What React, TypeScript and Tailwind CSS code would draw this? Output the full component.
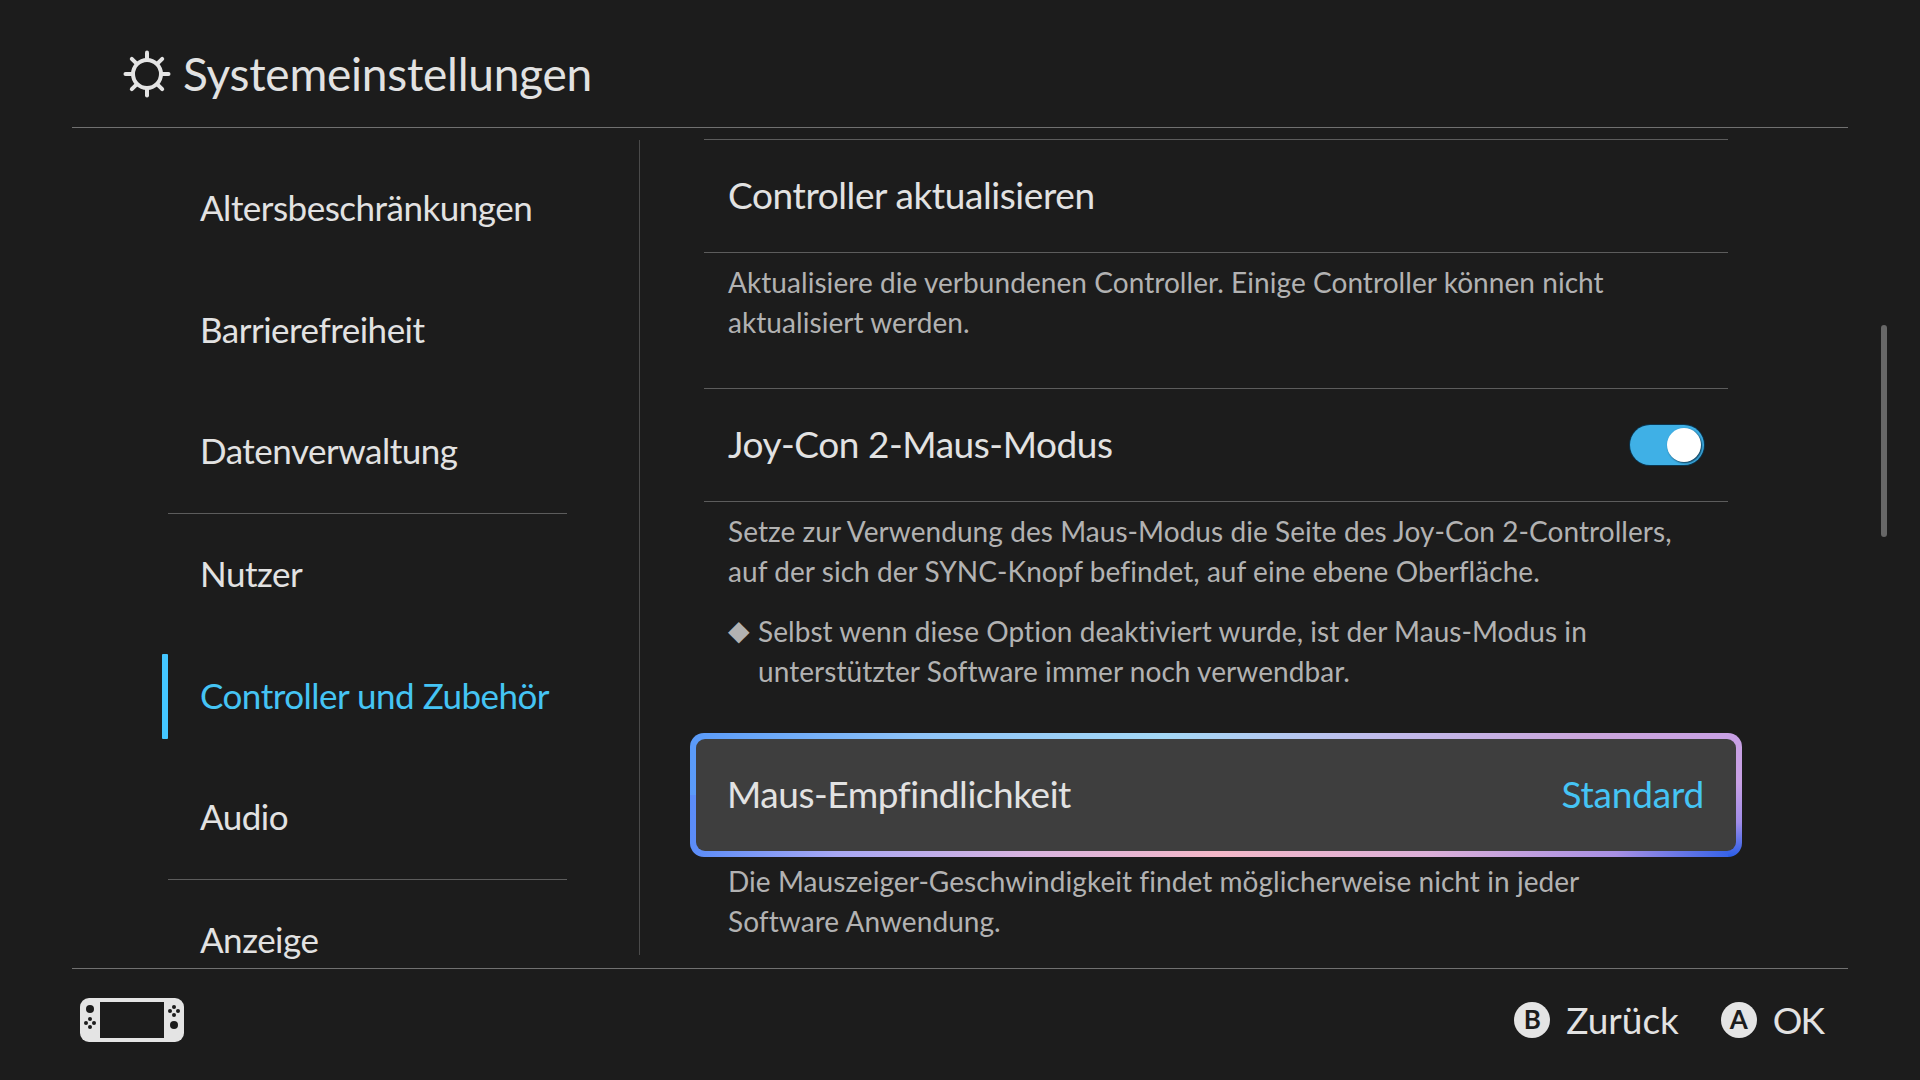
const font = "[font-family:Lato,'Noto_Sans',sans-serif]";

function Gear() {
  const rays = [0, 45, 90, 135, 180, 225, 270, 315];
  return (
    <svg width="48" height="48" viewBox="0 0 48 48" fill="none" stroke="#e4e4e4" strokeWidth="4" strokeLinecap="round">
      <circle cx="24" cy="24" r="14" />
      {rays.map((r) => (
        <line key={r} x1="24" y1="9" x2="24" y2="2.5" transform={`rotate(${r} 24 24)`} />
      ))}
    </svg>
  );
}

function Console() {
  return (
    <svg width="104" height="44" viewBox="0 0 104 44">
      <rect x="0" y="0" width="104" height="44" rx="9" fill="#e4e4e4" />
      <rect x="20" y="4" width="64" height="36" fill="#1c1c1c" />
      <g fill="#1c1c1c">
        <circle cx="10" cy="11" r="4" />
        <circle cx="10" cy="21" r="2" />
        <circle cx="10" cy="29" r="2" />
        <circle cx="6" cy="25" r="2" />
        <circle cx="14" cy="25" r="2" />
        <circle cx="94" cy="27" r="4" />
        <circle cx="94" cy="9" r="2" />
        <circle cx="94" cy="17" r="2" />
        <circle cx="90" cy="13" r="2" />
        <circle cx="98" cy="13" r="2" />
      </g>
    </svg>
  );
}

function SideItem({ label, active, divider }: { label: string; active?: boolean; divider?: boolean }) {
  return (
    <div className={`relative mr-[72px] ml-[168px] flex h-[122px] shrink-0 items-center ${divider ? "border-b border-[#5c5c5c]" : ""}`}>
      {active && <div className="absolute top-[18px] left-[-6px] h-[85px] w-[6px] rounded-[1px] bg-[#44c6ff]" />}
      <span className={`-mt-[4px] ml-[32px] whitespace-nowrap text-[35px] tracking-[-0.5px] ${active ? "text-[#45c4f4]" : "text-[#e2e2e2]"}`}>{label}</span>
    </div>
  );
}

function Desc({ children }: { children: React.ReactNode }) {
  return <p className="text-[28px] leading-[40px] tracking-[0.06px] text-[#b2b2b2]">{children}</p>;
}

function FooterButton({ letter, label, narrow }: { letter: string; label: string; narrow?: boolean }) {
  return (
    <div className="flex items-center gap-[16px]">
      <span className="flex h-[36px] w-[36px] items-center justify-center rounded-full bg-[#e4e4e4] text-[26px] font-bold text-[#1c1c1c]">{letter}</span>
      <span className={`text-[37px] leading-none text-[#e2e2e2] ${narrow ? "tracking-[-2px]" : ""}`}>{label}</span>
    </div>
  );
}

export default function App() {
  return (
    <div className={`flex h-[1080px] w-[1920px] flex-col overflow-hidden bg-[#1c1c1c] font-normal ${font}`}>
      <header className="mx-[72px] flex h-[128px] shrink-0 items-center gap-[12px] border-b border-[#707070] pt-[21px] pl-[51px]">
        <Gear />
        <h1 className="-mt-[1px] text-[46px] font-normal tracking-[-0.25px] text-[#e2e2e2]">Systemeinstellungen</h1>
      </header>
      <main className="flex h-[840px] shrink-0 overflow-hidden">
        <nav className="mt-[12px] h-[815px] w-[640px] shrink-0 border-r border-[#4a4a4a] pt-[8px]">
          <SideItem label="Altersbeschränkungen" />
          <SideItem label="Barrierefreiheit" />
          <SideItem label="Datenverwaltung" divider />
          <SideItem label="Nutzer" />
          <SideItem label="Controller und Zubehör" active />
          <SideItem label="Audio" divider />
          <SideItem label="Anzeige" />
        </nav>
        <section className="mt-[11px] ml-[64px] w-[1024px] shrink-0">
          <div className="flex h-[114px] items-center border-y border-[#5c5c5c] px-[24px]">
            <span className="-mt-[3px] text-[37px] tracking-[-0.4px] text-[#e2e2e2]">Controller aktualisieren</span>
          </div>
          <div className="h-[136px] border-b border-[#5c5c5c] px-[24px] pt-[9px]">
            <Desc>
              Aktualisiere die verbundenen Controller. Einige Controller können nicht
              <br />
              aktualisiert werden.
            </Desc>
          </div>
          <div className="flex h-[113px] items-center justify-between border-b border-[#5c5c5c] px-[24px]">
            <span className="-mt-[3px] text-[37px] tracking-[-0.45px] text-[#e2e2e2]">Joy-Con 2-Maus-Modus</span>
            <span className="relative h-[40px] w-[74px] rounded-full bg-[#3fb0e6] shadow-[0_0_0_1px_#0b3650]">
              <span className="absolute top-[3px] right-[3px] h-[34px] w-[34px] rounded-full bg-white shadow-[1px_1px_2px_#0b3650]" />
            </span>
          </div>
          <div className="h-[231px] px-[24px] pt-[9px]">
            <Desc>
              Setze zur Verwendung des Maus-Modus die Seite des Joy-Con 2-Controllers,
              <br />
              auf der sich der SYNC-Knopf befindet, auf eine ebene Oberfläche.
            </Desc>
            <div className="mt-[20px] flex">
              <span className="-mt-[2px] w-[30px] shrink-0 text-[28px] leading-[40px] text-[#b2b2b2]">◆</span>
              <Desc>
                Selbst wenn diese Option deaktiviert wurde, ist der Maus-Modus in
                <br />
                unterstützter Software immer noch verwendbar.
              </Desc>
            </div>
          </div>
          <div className="-mx-[14px] h-[124px] rounded-[14px] p-[6px] [background:linear-gradient(180deg,#c8a0e4_40%,#a08ce8_72%,#2a5ee8_100%)_right/14px_100%_no-repeat,linear-gradient(90deg,#5a9af8_0%,#8fc4f8_22%,#a4d8f6_45%,#c0bcec_65%,#cba6dc_85%,#c8a0e4_100%)_top/100%_50%_no-repeat,linear-gradient(90deg,#5a8cf8_0%,#a8a8f4_14%,#d8b4e0_32%,#f4b8c8_50%,#dcb0d8_70%,#a890e4_88%,#2a5ee8_100%)_bottom/100%_50%_no-repeat]">
            <div className="flex h-full items-center justify-between rounded-[9px] bg-[#3e3e3e] px-[32px]">
              <span className="-mt-[2px] -ml-[1px] text-[37px] tracking-[-0.45px] text-[#e2e2e2]">Maus-Empfindlichkeit</span>
              <span className="-mt-[2px] text-[37px] tracking-[-0.2px] text-[#45c4f4]">Standard</span>
            </div>
          </div>
          <div className="px-[24px] pt-[4px]">
            <Desc>
              Die Mauszeiger-Geschwindigkeit findet möglicherweise nicht in jeder
              <br />
              Software Anwendung.
            </Desc>
          </div>
        </section>
        <div className="mt-[197px] ml-[153px] h-[212px] w-[6px] shrink-0 rounded-full bg-[#676767]" />
      </main>
      <footer className="mx-[72px] flex h-[112px] shrink-0 items-center justify-between border-t border-[#707070] pr-[25px] pb-[10px] pl-[8px]">
        <Console />
        <div className="flex items-center gap-[42px]">
          <FooterButton letter="B" label="Zurück" />
          <FooterButton letter="A" label="OK" narrow />
        </div>
      </footer>
    </div>
  );
}
